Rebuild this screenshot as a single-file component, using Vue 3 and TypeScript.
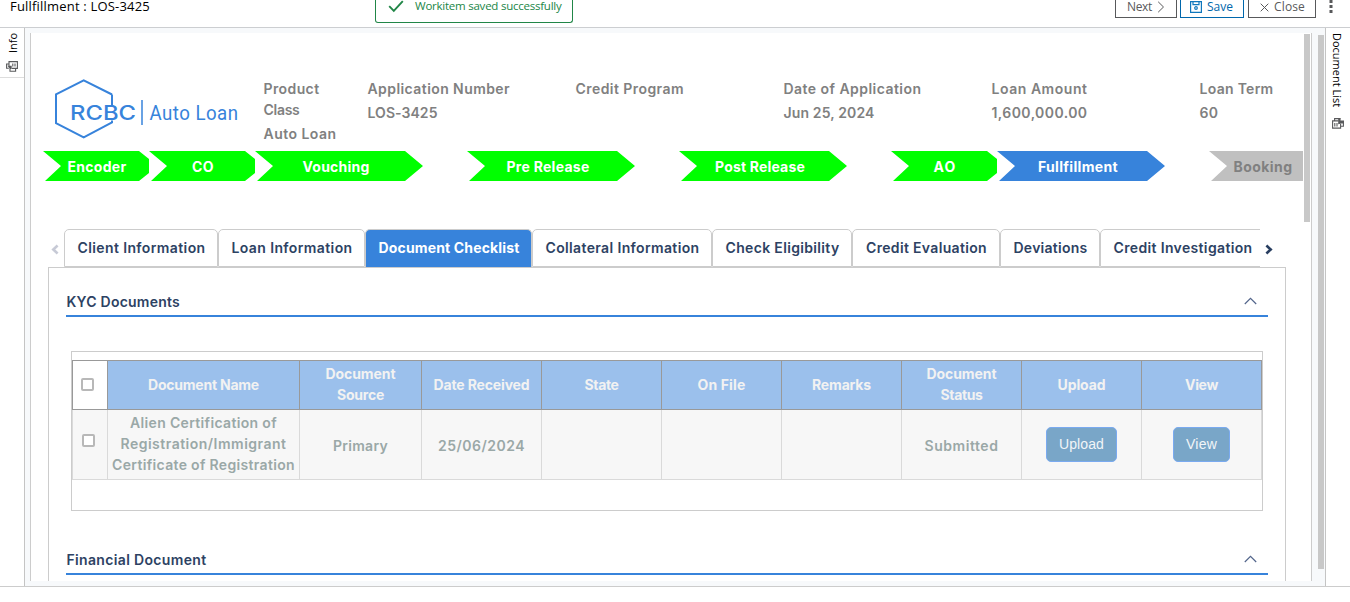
<script setup lang="ts">
import type { Directive } from 'vue'

// Spreads the letters of a label so that it fills the given width in pixels.
const vFit: Directive<HTMLElement, number> = {
  mounted(el, { value }) {
    const count = (el.textContent ?? '').trim().length
    if (!value || !count) return
    const width = el.getBoundingClientRect().width
    el.style.letterSpacing = `${(value - width) / count}px`
  },
}

interface Fitted { text: string; w: number }
interface Field { lines: Fitted[]; value: Fitted; kind: string }
interface Stage { text: string; w: number; kind: string }

const fields: Field[] = [
  { lines: [{ text: 'Product', w: 56 }, { text: 'Class', w: 36 }], value: { text: 'Auto Loan', w: 73 }, kind: 'half' },
  { lines: [{ text: 'Application Number', w: 142.5 }], value: { text: 'LOS-3425', w: 70 }, kind: 'full' },
  { lines: [{ text: 'Credit Program', w: 108.5 }], value: { text: '', w: 0 }, kind: 'full' },
  { lines: [{ text: 'Date of Application', w: 138 }], value: { text: 'Jun 25, 2024', w: 91 }, kind: 'full' },
  { lines: [{ text: 'Loan Amount', w: 96 }], value: { text: '1,600,000.00', w: 96 }, kind: 'full' },
  { lines: [{ text: 'Loan Term', w: 74 }], value: { text: '60', w: 19 }, kind: 'half' },
]

const stages: Stage[] = [
  { text: 'Encoder', w: 59, kind: 'short' },
  { text: 'CO', w: 22, kind: 'short' },
  { text: 'Vouching', w: 67, kind: 'long' },
  { text: 'Pre Release', w: 83, kind: 'long' },
  { text: 'Post Release', w: 90, kind: 'long' },
  { text: 'AO', w: 23, kind: 'short' },
  { text: 'Fullfillment', w: 80, kind: 'long current' },
  { text: 'Booking', w: 59, kind: 'short pending' },
]

const tabs = [
  { text: 'Client Information', w: 128, size: 't154' },
  { text: 'Loan Information', w: 121, size: 't147' },
  { text: 'Document Checklist', w: 141, size: 't167' },
  { text: 'Collateral Information', w: 154, size: 't180' },
  { text: 'Check Eligibility', w: 114, size: 't140' },
  { text: 'Credit Evaluation', w: 121, size: 't148' },
  { text: 'Deviations', w: 74, size: 't100' },
  { text: 'Credit Investigation', w: 139, size: 't180' },
]

const columns: Fitted[][] = [
  [{ text: 'Document Name', w: 111 }],
  [{ text: 'Document', w: 70 }, { text: 'Source', w: 47 }],
  [{ text: 'Date Received', w: 96 }],
  [{ text: 'State', w: 34 }],
  [{ text: 'On File', w: 48 }],
  [{ text: 'Remarks', w: 59 }],
  [{ text: 'Document', w: 70 }, { text: 'Status', w: 42 }],
  [{ text: 'Upload', w: 48 }],
  [{ text: 'View', w: 33 }],
]

const row: Fitted[][] = [
  [
    { text: 'Alien Certification of', w: 147 },
    { text: 'Registration/Immigrant', w: 166 },
    { text: 'Certificate of Registration', w: 183 },
  ],
  [{ text: 'Primary', w: 55 }],
  [{ text: '25/06/2024', w: 87 }],
  [],
  [],
  [],
  [{ text: 'Submitted', w: 74 }],
]
</script>

<template>
  <div class="page">
    <header class="topbar">
      <h1><span v-fit="140">Fullfillment : LOS-3425</span></h1>
      <div class="toast">
        <svg class="tick" viewBox="0 0 16 13"><path d="M1.2 6.2 5.8 10.8 14.8 1.2" /></svg>
        <span v-fit="146.5">Workitem saved successfully</span>
      </div>
      <div class="actions">
        <button class="next"><span v-fit="25">Next</span>
          <svg viewBox="0 0 8 12"><path d="M1.2.8 6.5 6 1.2 11.2" /></svg>
        </button>
        <button class="save">
          <svg viewBox="0 0 12 12"><path d="M.6.6h10.8v10.8H.6zM3 .6v3h6v-3" /><circle cx="6" cy="7" r="1.3" /></svg>
          <span v-fit="26">Save</span>
        </button>
        <button class="close">
          <svg viewBox="0 0 9 9"><path d="M.7.7 8.3 8.3M8.3.7.7 8.3" /></svg>
          <span v-fit="31">Close</span>
        </button>
        <svg class="more" viewBox="0 0 4 16"><rect x=".5" y="1" width="3" height="3" /><rect x=".5" y="6" width="3" height="3" /><rect x=".5" y="11" width="3" height="3" /></svg>
      </div>
    </header>

    <div class="workspace">
      <aside class="rail left">
        <div class="rail-tab">
          <span class="up">Info</span>
          <svg viewBox="0 0 12 11"><path d="M3 5V.6h8.400v6.800H6M6.800 2.500v3M9 2.500v3M3 3H.6v4.200h2.200M4 7.500v2.800h5.600V7.500" /><path class="solid" d="M1.500 4.800h4.200v3.200H4z" /></svg>
        </div>
      </aside>

      <main class="frame">
        <div class="panel">
          <section class="summary">
            <svg class="logo" viewBox="0 0 186 60">
              <path d="M58 15.500V26M58 41.500v2L29.700 58.300 2 44.200V15.300L29.700 1.300 58 15.500" />
              <text class="brand" x="16" y="41" textLength="66" lengthAdjust="spacingAndGlyphs">RCBC</text>
              <path class="bar" d="M88 21v25" />
              <text class="product" x="95.500" y="41" textLength="89" lengthAdjust="spacingAndGlyphs">Auto Loan</text>
            </svg>
            <dl class="fields">
              <div v-for="f in fields" :key="f.lines[0].text" :class="f.kind">
                <dt v-for="l in f.lines" :key="l.text"><span v-fit="l.w">{{ l.text }}</span></dt>
                <dd><span v-fit="f.value.w">{{ f.value.text }}</span></dd>
              </div>
            </dl>
          </section>

          <ol class="stages">
            <li v-for="s in stages" :key="s.text" :class="s.kind">
              <div class="arrow"><span v-fit="s.w">{{ s.text }}</span></div>
            </li>
          </ol>

          <nav class="tabs">
            <svg class="prev" viewBox="0 0 8 11"><path d="M6.600 1.500 2.300 5.500 6.600 9.500" /></svg>
            <div class="strip">
              <div v-for="(t, i) in tabs" :key="t.text" class="tab" :class="[t.size, { active: i === 2 }]">
                <span v-fit="t.w">{{ t.text }}</span>
              </div>
            </div>
            <svg class="following" viewBox="0 0 8 11"><path d="M1.400 1.500 5.700 5.500 1.400 9.500" /></svg>
          </nav>

          <section class="content">
            <h2><span v-fit="113.5">KYC Documents</span>
              <svg viewBox="0 0 13 8"><path d="M.8 7 6.500 1.300 12.200 7" /></svg>
            </h2>
            <div class="grid-box">
              <table>
                <colgroup>
                  <col class="c-check"><col class="c-name"><col class="c-source">
                  <col v-for="n in 7" :key="n" class="c-std">
                </colgroup>
                <thead>
                  <tr>
                    <th class="pick"><i class="box"></i></th>
                    <th v-for="(c, i) in columns" :key="i">
                      <div v-for="l in c" :key="l.text"><span v-fit="l.w">{{ l.text }}</span></div>
                    </th>
                  </tr>
                </thead>
                <tbody>
                  <tr>
                    <td class="pick"><i class="box"></i></td>
                    <td v-for="(c, i) in row" :key="i" :class="{ single: c.length === 1 }">
                      <div v-for="l in c" :key="l.text"><span v-fit="l.w">{{ l.text }}</span></div>
                    </td>
                    <td class="act"><button class="cell-btn upload"><span v-fit="45">Upload</span></button></td>
                    <td class="act"><button class="cell-btn"><span v-fit="31">View</span></button></td>
                  </tr>
                </tbody>
              </table>
            </div>
            <h2 class="second"><span v-fit="140">Financial Document</span>
              <svg viewBox="0 0 13 8"><path d="M.8 7 6.500 1.300 12.200 7" /></svg>
            </h2>
          </section>
          <div class="inner-scroll"></div>
        </div>
        <div class="outer-scroll"></div>
      </main>

      <aside class="rail right">
        <span class="down">Document List</span>
        <svg viewBox="0 0 12 11"><path d="M6.500 2.900H.6v7.200h8V6M2.800 5v3.500M5 5v3.500M2.600 2.900V.6h6M8.600 8.200h2.800V4" /><path class="solid" d="M6.200.6h2.300v2H12v2.800H9.400L6.200 6.200z" /></svg>
      </aside>
    </div>
  </div>
</template>

<style>
html, body { margin: 0; background: #fff; overflow: hidden; }
</style>

<style scoped>
* { box-sizing: border-box; }
.page { width: 1350px; height: 602px; overflow: hidden; font-family: Inter, "Noto Sans", sans-serif; font-size: 14px; background: #fff; }
span { white-space: nowrap; display: inline-block; }
svg { display: block; fill: none; flex: none; overflow: visible; }

.topbar { height: 28px; border-bottom: 1px solid #ccced1; display: flex; align-items: flex-start; font-family: "Open Sans", sans-serif; }
h1 { margin: 0; padding-left: 10px; width: 375px; font-size: 13px; font-weight: 400; line-height: 12px; color: #000; }
.toast { width: 198px; height: 23px; border: 1px solid #218647; border-top: 0; border-radius: 0 0 3px 3px; display: flex; padding-left: 12px; gap: 11px; color: #218647; font-size: 11.5px; line-height: 12px; }
.tick { width: 16px; height: 13px; stroke: #218647; stroke-width: 1.900; }
.actions { margin-left: auto; display: flex; align-items: flex-start; }
.actions button { height: 18px; border: 1px solid #58595b; border-top: 0; background: #fff; color: #58595b; padding: 0; display: flex; align-items: flex-start; font: 12px/14px "Open Sans", sans-serif; }
.actions svg { stroke: currentColor; stroke-width: 1; }
.actions .next { width: 62px; padding-left: 11px; gap: 5px; margin-right: 3px; }
.next svg { width: 8px; height: 12px; margin-top: 1px; }
.actions .save { width: 64px; padding-left: 9px; gap: 5px; margin-right: 4px; border-color: #0067ac; color: #0067ac; }
.actions .save svg { width: 12px; height: 12px; margin-top: 1px; stroke: #0f77bd; stroke-width: 1.200; }
.actions .close { width: 68px; padding-left: 11px; gap: 5px; }
.close svg { width: 9px; height: 9px; margin-top: 3px; }
.actions .more { width: 4px; height: 16px; margin: -1px 17px 0 13px; fill: #58595b; stroke: none; }

.workspace { height: 559px; display: flex; border-bottom: 1px solid #ccc; }
.rail { font: 12px "Open Sans", sans-serif; color: #000; }
.rail svg { width: 12px; height: 11px; stroke: #58595b; stroke-width: 1.100; }
.rail .solid { fill: #58595b; stroke: none; }
.left { width: 25px; border-right: 1px solid #c4c4c4; }
.rail-tab { height: 50px; border-bottom: 1px solid #ddd; padding: 5px 0 0 6px; display: flex; flex-direction: column; gap: 8px; }
.up, .down { writing-mode: vertical-rl; line-height: 16px; }
.up { transform: rotate(180deg); height: 20px; width: 16px; margin-left: -1px; font-size: 11px; }
.down { height: 75px; width: 16px; font-size: 11px; }
.right { width: 25px; border-left: 1px solid #c4c4c4; padding: 5px 0 0 3px; display: flex; flex-direction: column; gap: 10px; }
.right svg { margin-left: 3px; }

.frame { width: 1300px; padding: 5px 0 5px 5px; background: #f7f9fb; display: flex; }
.panel { position: relative; width: 1282px; height: 548px; background: #fff; border: solid #ccc; border-width: 0 1px; overflow: hidden; }
.inner-scroll { position: absolute; right: 1px; top: 1px; width: 6px; height: 188px; background: #c8c8c8; }
.outer-scroll { width: 6px; height: 534px; margin: 2px 0 0 6px; background: #c8c8c8; }

.summary { height: 118px; display: flex; }
.logo { width: 186px; height: 60px; margin: 46px 0 0 23px; stroke: #3783db; stroke-width: 2; }
.logo .bar { stroke-width: 1.500; }
.logo text { fill: #3783db; stroke: none; }
.brand { font: 500 20px Inter, sans-serif; }
.product { font: 400 20px Roboto, sans-serif; letter-spacing: .5px; }
.fields { margin: 45px 0 0 23px; display: flex; color: #808080; font-weight: 600; line-height: 21px; }
.fields span { margin-left: .5px; }
.half { width: 104px; flex: none; }
.full { width: 208px; flex: none; }
dd { margin: 3px 0 0; }

.stages { list-style: none; margin: 0 0 0 12px; padding: 0; width: 1260px; height: 30px; display: flex; overflow: hidden; color: #fff; font-weight: 700; }
.stages li { flex: none; }
.short { width: 106px; overflow: hidden; }
.long { width: 212px; }
.arrow { height: 30px; display: flex; justify-content: center; align-items: center; background: #0f0; }
.short .arrow { width: 114px; padding-right: 6px; clip-path: polygon(0 0, 96px 0, 106px 8px, 106px 22px, 96px 100%, 2px 100%, 18px 50%); }
.long .arrow { width: 168px; padding-right: 6px; clip-path: polygon(0 0, 150px 0, 100% 50%, 150px 100%, 2px 100%, 18px 50%); }
.current .arrow { background: #3783db; }
.pending .arrow { background: #c0c0c0; color: #808080; clip-path: polygon(0 0, 100% 0, 100% 100%, 2px 100%, 18px 50%); }

.tabs { display: flex; height: 38px; margin: 48px 0 0 19px; position: relative; z-index: 1; }
.tabs > svg { width: 8px; height: 11px; margin-top: 15px; stroke: #c7cad6; stroke-width: 2.600; }
.tabs > .prev { transform: translateX(1px); }
.tabs > .following { margin-left: 5px; stroke: #283e60; }
.strip { display: flex; width: 1196px; margin-left: 6px; overflow: hidden; }
.tab { flex: none; height: 38px; border: 1px solid #ccc; border-radius: 5px 5px 0 0; padding: 0 0 2px 1px; display: flex; justify-content: center; align-items: center; color: #2d4263; font-weight: 600; }
.tab.active { background: #3783db; color: #fff; font-weight: 700; border-bottom: 0; padding-bottom: 3px; }
.t154 { width: 154px; } .t147 { width: 147px; } .t167 { width: 167px; } .t180 { width: 180px; }
.t140 { width: 140px; } .t148 { width: 148px; } .t100 { width: 100px; }
.tab:last-child { justify-content: flex-start; padding-left: 12.500px; }

.content { width: 1238px; height: 400px; margin: 0 0 0 17px; border: 1px solid #ccc; padding: 24px 17px 0; }
h2 { margin: 0; height: 25px; border-bottom: 2px solid #3783db; display: flex; justify-content: space-between; font-size: 14px; font-weight: 600; line-height: 20px; color: #2d4263; }
h2 span { margin-left: .5px; }
h2 svg { width: 13px; height: 8px; margin: 5px 11px 0 0; stroke: #53658b; stroke-width: 1.200; }
.grid-box { width: 1192px; height: 160px; margin: 34px 0 0 5px; border: 1px solid #ccc; padding-top: 8px; }
.second { margin-top: 39px; }

table { border-collapse: collapse; table-layout: fixed; width: 1190px; }
.c-check { width: 35px; } .c-name { width: 192px; } .c-source { width: 122px; } .c-std { width: 120px; }
th, td { padding: 0 0 2px 0; text-align: center; vertical-align: middle; line-height: 21px; font-weight: 600; }
th { height: 49px; border: 1px solid #999; background: #9bc0ec; color: #f2f2f2; font-weight: 700; }
td { height: 70px; border: 1px solid #dadada; background: #f7f7f7; color: #9aa8a7; }
td.single { padding: 1px 0 0; }
td.act { padding: 0; }
th.pick { background: #fff; padding: 0 5px 2px 0; }
td.pick { padding: 0 3px 8px 0; }
.box { display: block; width: 13px; height: 13px; margin: 0 auto; border: 2px solid #b8b8b8; border-radius: 2px; background: #fff; }
.cell-btn { width: 57px; height: 35px; margin: 0; padding: 0 0 2px; border: 1px solid #7aaaf0; border-radius: 5px; background: #79a6c8; color: #f2f5f7; font: 14px "Liberation Sans", sans-serif; vertical-align: middle; }
.cell-btn.upload { width: 71px; }
</style>
